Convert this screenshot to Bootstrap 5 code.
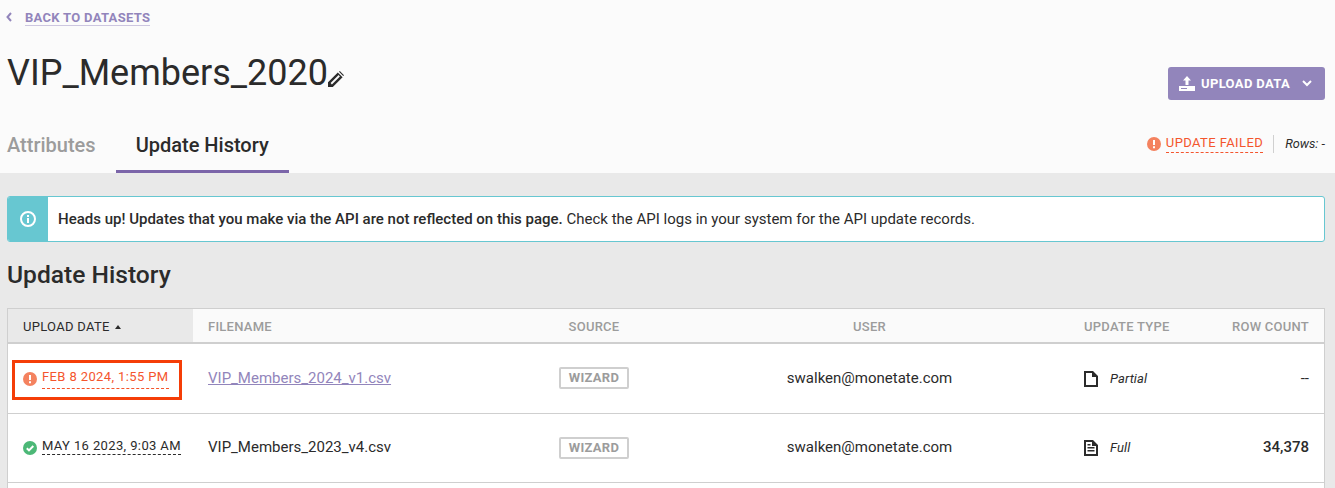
<!DOCTYPE html>
<html lang="en">
<head>
<meta charset="utf-8">
<title>VIP_Members_2020</title>
<link href="https://cdn.jsdelivr.net/npm/bootstrap@5.3.0/dist/css/bootstrap.min.css" rel="stylesheet">
<style>
html,body{height:488px;overflow:hidden}
body{font-family:Roboto,"Liberation Sans",sans-serif;background:#e9e9e9;color:#2b2b2b;font-size:15px}
.top-pane{background:#fbfbfb;height:173px;padding:0 10px 0 7px}
.back-row{height:35px;padding-top:11px;font-size:13px;font-weight:700;letter-spacing:.3px;line-height:15px}
.back-row svg{margin-right:13px;margin-top:1px;margin-left:-1px}
.back-link{color:#9285bb;text-decoration:none;border-bottom:1px solid #cdc7e0;display:inline-block;line-height:14px}
.title-row{height:71px}
.page-title{font-size:36px;font-weight:400;line-height:42px;margin:0;padding-top:17px;color:#2b2b2b}
.edit-pen{margin-top:19px;margin-left:-1px}
.upload-btn{background:#9285bb;border:0;color:#fff;font-size:13px;font-weight:700;letter-spacing:.35px;width:157px;height:33px;border-radius:3px;padding:0 13px 0 11px;margin-top:32px}
.upload-btn:hover{background:#9285bb;color:#fff}
.upload-btn svg.up-mark{margin-right:6px}
.tab-row{height:67px}
.tab-item{font-size:20px;font-weight:500;line-height:24px;padding:27px 20px 16px;color:#2b2b2b;text-decoration:none;border-bottom:3px solid #7b65a9;height:67px;box-sizing:border-box}
.tab-item.off{color:#9c9c9c;border-bottom-color:transparent;padding-left:0;padding-right:20px}
.status-side{padding-top:8px}
.status-fail{color:#f4552d;font-size:13px;letter-spacing:.4px;border-bottom:1px dashed #f4552d;line-height:16px;padding-bottom:1px;display:inline-block;margin-left:5px}
.rows-note{font-size:12.7px;font-style:italic;border-left:1px solid #d0d0d0;margin-left:10px;padding-left:11px;line-height:18px}
.rows-note span{font-style:normal}
.main-pane{padding:23px 10px 0 7px}
.note-box{height:46px;background:#fff;border:1px solid #67c7d1;border-radius:3px;font-size:15px;overflow:hidden}
.note-icon{width:41px;background:#67c7d1;margin:-1px 0 -1px -1px}
.note-text{padding-left:10px}
.section-title{font-size:24.6px;font-weight:500;line-height:28px;margin:19px 0 19px;color:#2b2b2b}
.history-wrap{border:1px solid #cfcfcf;border-bottom:0;background:#fff}
.history-table{table-layout:fixed;width:100%;margin:0;border-collapse:separate;border-spacing:0}
.history-table th{height:35px;background:#fafafa;color:#9c9c9c;font-size:13px;font-weight:500;letter-spacing:.25px;border-bottom:2px solid #cfcfcf;padding:3px 15px 0;vertical-align:middle}
.history-table th.sorted{background:#e9e9e9;color:#2b2b2b;font-weight:400;letter-spacing:.3px}
.history-table td{height:70px;padding:0 15px;vertical-align:middle;border-bottom:1px solid #cfcfcf;font-size:15px;background:#fff;color:#2b2b2b}
.history-table td.date-col{padding-right:0}
.history-table tr.second-row td{height:69px;padding-bottom:1px}
.history-table tr.tail-row td{height:5px;border-bottom:0;padding:0}
.caret-up{display:inline-block;border-left:3px solid transparent;border-right:3px solid transparent;border-bottom:4px solid #2b2b2b;margin-left:5px;vertical-align:2px}
.date-wrap{gap:5px}
.date-cell{font-size:13px;letter-spacing:.38px;display:inline-block;white-space:nowrap;line-height:15px;padding-bottom:1px;margin-bottom:3px;border-bottom:1px dashed #2b2b2b}
.date-cell.bad{color:#f4552d;border-bottom-color:#f4552d;padding-bottom:4px;margin-bottom:0}
.flag-box{position:absolute;left:4px;top:16px;width:170px;height:40px;border:3px solid #f53d07;pointer-events:none}
.file-link{color:#9285bb}
.source-tag{display:inline-block;border:2px solid #cfcfcf;border-radius:2px;color:#9c9c9c;font-size:13px;font-weight:700;letter-spacing:.3px;width:70px;height:22px;line-height:17px;text-align:center;vertical-align:1px}
.second-row .source-tag{vertical-align:0}
.type-name{font-size:13px;font-style:italic;margin-left:12px;letter-spacing:.1px}
.count-cell{font-weight:500}
</style>
</head>
<body>
<div class="top-pane">
  <div class="back-row d-flex align-items-start">
    <svg width="6" height="10" viewBox="0 0 6 10"><path d="M5 1 1.500 5 5 9" fill="none" stroke="#9285bb" stroke-width="2"/></svg>
    <a class="back-link" href="#">BACK TO DATASETS</a>
  </div>
  <div class="title-row d-flex justify-content-between align-items-start">
    <h1 class="page-title d-flex">VIP_Members_2020<svg class="edit-pen" width="17" height="17" viewBox="0 0 17 17"><path d="M1 16v-4.800L10.800 1.400l4.800 4.800L5.800 16zM3.600 12.100l1.300 1.300 8-8-1.300-1.300z" fill="#2b2b2b"/><path d="M12 .8l.8-.8 4.200 4.200-.8.800z" fill="#2b2b2b"/></svg></h1>
    <button class="upload-btn btn d-flex align-items-center" type="button">
      <svg class="up-mark" width="16" height="15" viewBox="0 0 16 15"><path d="M8 0l4 4.500H9.500V9h-3V4.500H4z" fill="#fff"/><path d="M0 10h16v5H0z" fill="#fff"/><path d="M2 12h6v1H2z" fill="#9285bb"/></svg>
      <span>UPLOAD DATA</span>
      <svg class="ms-auto" width="10" height="7" viewBox="0 0 10 7"><path d="M1 1l4 4 4-4" fill="none" stroke="#fff" stroke-width="2"/></svg>
    </button>
  </div>
  <div class="tab-row d-flex justify-content-between">
    <div class="d-flex">
      <a class="tab-item off" href="#">Attributes</a>
      <a class="tab-item" href="#">Update History</a>
    </div>
    <div class="status-side d-flex align-items-center">
      <svg width="14" height="14" viewBox="0 0 14 14"><circle cx="7" cy="7" r="7" fill="#f4825f"/><path d="M6 3h2v5H6zM6 9.300h2v2H6z" fill="#fff"/></svg>
      <span class="status-fail">UPDATE FAILED</span>
      <span class="rows-note">Rows: <span>-</span></span>
    </div>
  </div>
</div>
<div class="main-pane">
  <div class="note-box d-flex align-items-stretch">
    <div class="note-icon d-flex align-items-center justify-content-center">
      <svg width="16" height="16" viewBox="0 0 16 16"><circle cx="8" cy="8" r="7" fill="none" stroke="#fff" stroke-width="2"/><path d="M7 7h2v5H7zM7 4h2v2H7z" fill="#fff"/></svg>
    </div>
    <div class="note-text d-flex align-items-center"><span><strong class="fw-medium">Heads up! Updates that you make via the API are not reflected on this page.</strong> Check the API logs in your system for the API update records.</span></div>
  </div>
  <h2 class="section-title">Update History</h2>
  <div class="history-wrap">
    <table class="history-table">
      <colgroup><col style="width:185px"><col style="width:325px"><col style="width:152px"><col style="width:399px"><col style="width:144px"><col></colgroup>
      <thead>
        <tr>
          <th class="sorted">UPLOAD DATE<span class="caret-up"></span></th>
          <th>FILENAME</th>
          <th class="text-center">SOURCE</th>
          <th class="text-center">USER</th>
          <th>UPDATE TYPE</th>
          <th class="text-end">ROW COUNT</th>
        </tr>
      </thead>
      <tbody>
        <tr>
          <td class="date-col" style="position:relative">
            <span class="flag-box"></span>
            <div class="date-wrap d-flex align-items-center">
              <svg width="14" height="14" viewBox="0 0 14 14"><circle cx="7" cy="7" r="7" fill="#f4825f"/><path d="M6 3h2v5H6zM6 9.300h2v2H6z" fill="#fff"/></svg>
              <span class="date-cell bad">FEB 8 2024, 1:55 PM</span>
            </div>
          </td>
          <td><a class="file-link" href="#">VIP_Members_2024_v1.csv</a></td>
          <td class="text-center"><span class="source-tag">WIZARD</span></td>
          <td class="text-center">swalken@monetate.com</td>
          <td>
            <div class="d-flex align-items-center">
              <svg width="14" height="16" viewBox="0 0 14 16"><path fill-rule="evenodd" d="M0 0h9l5 5v11H0zM2 2v12h10V6H8V2z" fill="#2b2b2b"/></svg>
              <span class="type-name">Partial</span>
            </div>
          </td>
          <td class="text-end">--</td>
        </tr>
        <tr class="second-row">
          <td class="date-col">
            <div class="date-wrap d-flex align-items-center">
              <svg width="14" height="14" viewBox="0 0 14 14"><circle cx="7" cy="7" r="7" fill="#4cb877"/><path d="M3.800 7.200 6 9.400l4.300-4.400" fill="none" stroke="#fff" stroke-width="2"/></svg>
              <span class="date-cell">MAY 16 2023, 9:03 AM</span>
            </div>
          </td>
          <td>VIP_Members_2023_v4.csv</td>
          <td class="text-center"><span class="source-tag">WIZARD</span></td>
          <td class="text-center">swalken@monetate.com</td>
          <td>
            <div class="d-flex align-items-center">
              <svg width="14" height="16" viewBox="0 0 14 16"><path fill-rule="evenodd" d="M0 0h9l5 5v11H0zM2 2v12h10V6H8V2zM3.500 7h7v1.500h-7zM3.500 10h7v1.500h-7zM3.500 4h3v1.500h-3z" fill="#2b2b2b"/></svg>
              <span class="type-name">Full</span>
            </div>
          </td>
          <td class="text-end count-cell">34,378</td>
        </tr>
        <tr class="tail-row"><td colspan="6"></td></tr>
      </tbody>
    </table>
  </div>
</div>
<script src="https://cdn.jsdelivr.net/npm/bootstrap@5.3.0/dist/js/bootstrap.bundle.min.js"></script>
</body>
</html>
